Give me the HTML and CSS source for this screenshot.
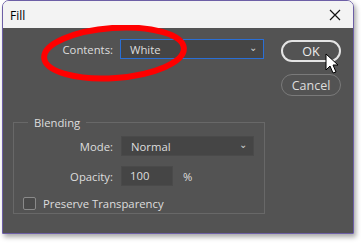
FILE: index.html
```html
<!DOCTYPE html>
<html lang="en">
<head>
    <meta charset="UTF-8">
    <title>Fill</title>
    <link rel="stylesheet" href="styles.css">
</head>
<body>
    <div class="window">
        <div class="titlebar">
            <span class="title">Fill</span>
            <svg class="close" width="12" height="12" viewBox="0 0 12 12">
                <path d="M1 1 L11 11 M11 1 L1 11" stroke="#111" stroke-width="1.2" fill="none"/>
            </svg>
        </div>
        <div class="content">
            <div class="main">
                <div class="row contents-row">
                    <span class="label">Contents:</span>
                    <div class="select select-contents">
                        <span>White</span>
                        <span class="chev">&#x2304;</span>
                    </div>
                </div>
                <fieldset class="group">
                    <legend>Blending</legend>
                    <div class="row">
                        <span class="label label-in">Mode:</span>
                        <div class="select select-mode">
                            <span>Normal</span>
                            <span class="chev">&#x2304;</span>
                        </div>
                    </div>
                    <div class="row">
                        <span class="label label-in">Opacity:</span>
                        <div class="input">100</div>
                        <span class="unit">%</span>
                    </div>
                    <div class="row check-row">
                        <span class="checkbox"></span>
                        <span>Preserve Transparency</span>
                    </div>
                </fieldset>
            </div>
            <div class="side">
                <button class="btn btn-ok">OK</button>
                <button class="btn btn-cancel">Cancel</button>
            </div>
        </div>
    </div>

    <!-- red marker round the Contents field -->
    <svg class="marker" width="160" height="70" viewBox="0 0 160 70">
        <ellipse cx="74" cy="28" rx="70" ry="25" fill="none" stroke="#f00" stroke-width="6" transform="rotate(-4 74 28)"/>
    </svg>

    <!-- mouse pointer -->
    <svg class="pointer" width="16" height="22" viewBox="0 0 16 22">
        <path d="M1 1 L1 17 L5 13 L8 20 L11 19 L8 12 L13 12 Z" fill="#fff" stroke="#000" stroke-width="1"/>
    </svg>
</body>
</html>
```

FILE: styles.css
```css
body { margin: 0; background: #fff; font-family: "Open Sans", Arial, sans-serif; position: relative; width: 361px; height: 245px; overflow: hidden; }
.window { margin-left: 2px; width: 350px; border: 1px solid #6d5fa6; border-radius: 7px 7px 0 0; overflow: hidden; box-shadow: 2px 3px 5px rgba(0,0,0,0.35); }
.titlebar { height: 27px; background: #f3f3f3; display: flex; align-items: center; justify-content: space-between; padding: 0 12px 0 7px; font-size: 12px; color: #000; }
.title { padding-top: 1px; }
.content { background: #535353; height: 205px; display: flex; color: #dedede; font-size: 11.3px; }
.main { width: 267px; padding-left: 10px; }
.row { display: flex; align-items: center; height: 20px; }
.contents-row { margin-top: 11px; }
.label { width: 107px; text-align: right; padding-right: 7px; box-sizing: border-box; }
.label-in { width: 107px; padding-right: 8px; }
.select { display: flex; justify-content: space-between; align-items: center; box-sizing: border-box; background: #454545; padding: 0 6px 0 9px; height: 20px; }
.select-contents { width: 144px; border: 1px solid #2a6fd6; }
.select-mode { width: 133px; border: 1px solid #4a4a4a; }
.chev { font-size: 10px; line-height: 1; margin-top: -4px; color: #cfcfcf; }
.group { margin: 56px 0 0 0; padding: 2px 0 0 0; width: 252px; height: 99px; box-sizing: border-box; border: 1px solid #686868; }
.group legend { margin-left: 14px; padding: 0 6px; font-size: 11.3px; }
.group .row { margin-top: 10px; }
.group .row:first-of-type { margin-top: 4px; }
.input { width: 52px; height: 20px; box-sizing: border-box; background: #454545; border: 1px solid #4a4a4a; padding-left: 8px; line-height: 18px; }
.unit { margin-left: 10px; }
.check-row { margin-top: 7px !important; padding-left: 9px; }
.checkbox { width: 11px; height: 11px; border: 1px solid #8a8a8a; border-radius: 2px; background: #4a4a4a; margin-right: 7px; }
.side { display: flex; flex-direction: column; gap: 12px; padding-top: 12px; padding-left: 1px; }
.btn { width: 60px; height: 22px; border-radius: 11px; background: #535353; font-family: inherit; font-size: 12.5px; color: #eee; padding: 0; }
.btn-ok { border: 2px solid #e4e4e4; }
.btn-cancel { border: 1px solid #7a7a7a; color: #ddd; }
.marker { position: absolute; left: 40px; top: 25px; }
.pointer { position: absolute; left: 325px; top: 53px; }
```
